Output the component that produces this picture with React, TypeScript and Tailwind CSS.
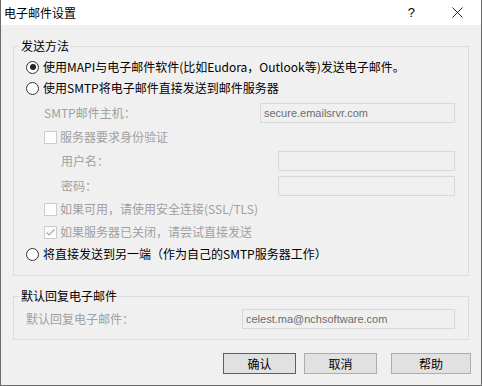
import React from "react";

const F = { fontFamily: '"Noto Sans CJK SC", "Liberation Sans", sans-serif' };

function Radio({ checked }: { checked?: boolean }) {
  return (
    <span className="w-[13px] h-[13px] rounded-full border border-[#333] bg-white flex items-center justify-center shrink-0">
      {checked && <span className="w-[6px] h-[6px] rounded-full bg-[#222]" />}
    </span>
  );
}

function Check({ checked }: { checked?: boolean }) {
  return (
    <span className="w-[13px] h-[13px] border border-[#cccccc] bg-[#fcfcfc] flex items-center justify-center shrink-0">
      {checked && (
        <svg width="11" height="11" viewBox="0 0 11 11">
          <path d="M1.5 5.5 L4 8 L9.5 2.5" fill="none" stroke="#a8a8a8" strokeWidth="1.2" />
        </svg>
      )}
    </span>
  );
}

function Input({ value, w }: { value?: string; w: string }) {
  return (
    <div
      className={`${w} h-[20px] border border-[#d9d9d9] bg-[#f0f0f0] flex items-center pl-[3px] text-[11px] text-[#6d6d6d]`}
      style={{ fontFamily: '"Liberation Sans", sans-serif' }}
    >
      {value}
    </div>
  );
}

export default function App() {
  return (
    <div
      className="w-[482px] h-[386px] bg-[#f0f0f0] border-x border-b border-[#6a6a6a] flex flex-col text-[12px] text-black"
      style={F}
    >
      <div className="h-[25px] bg-white flex items-center pl-[3px] shrink-0">
        <span className="leading-[16px]">电子邮件设置</span>
        <span className="ml-auto mr-[37px] text-[13px]" style={{ fontFamily: '"Liberation Sans", sans-serif' }}>?</span>
        <svg width="11" height="11" viewBox="0 0 11 11" className="mr-[18px]">
          <path d="M0.5 0.5 L10.5 10.5 M10.5 0.5 L0.5 10.5" stroke="#222" strokeWidth="1" />
        </svg>
      </div>

      <fieldset className="ml-[12px] mt-[13px] w-[456px] border border-[#dcdcdc] pl-[12px] pr-[13px] pb-[11px] flex flex-col">
        <legend className="-ml-[6px] px-[1px] leading-[16px]">发送方法</legend>
        <div className="mt-[3px] h-[20px] flex items-center">
          <Radio checked />
          <span className="ml-[4px]">使用MAPI与电子邮件软件(比如Eudora，Outlook等)发送电子邮件。</span>
        </div>
        <div className="mt-[1px] h-[20px] flex items-center">
          <Radio />
          <span className="ml-[4px]">使用SMTP将电子邮件直接发送到邮件服务器</span>
        </div>
        <div className="mt-[5px] h-[20px] flex items-center justify-between pl-[18px] text-[#a0a0a0]">
          <span>SMTP邮件主机：</span>
          <Input w="w-[195px]" value="secure.emailsrvr.com" />
        </div>
        <div className="mt-[4px] h-[20px] flex items-center pl-[18px] text-[#a0a0a0]">
          <Check />
          <span className="ml-[3px]">服务器要求身份验证</span>
        </div>
        <div className="mt-[4px] h-[20px] flex items-center justify-between pl-[35px] text-[#a0a0a0]">
          <span>用户名：</span>
          <Input w="w-[177px]" />
        </div>
        <div className="mt-[5px] h-[20px] flex items-center justify-between pl-[35px] text-[#a0a0a0]">
          <span>密码：</span>
          <Input w="w-[177px]" />
        </div>
        <div className="mt-[3px] h-[20px] flex items-center pl-[18px] text-[#a0a0a0]">
          <Check />
          <span className="ml-[3px]">如果可用，请使用安全连接(SSL/TLS)</span>
        </div>
        <div className="mt-[3px] h-[20px] flex items-center pl-[18px] text-[#a0a0a0]">
          <Check checked />
          <span className="ml-[3px]">如果服务器已关闭，请尝试直接发送</span>
        </div>
        <div className="mt-[2px] h-[20px] flex items-center">
          <Radio />
          <span className="ml-[4px]">将直接发送到另一端（作为自己的SMTP服务器工作）</span>
        </div>
      </fieldset>

      <fieldset className="ml-[12px] mt-[12px] w-[456px] border border-[#dcdcdc] pl-[12px] pr-[13px] pb-[10px] flex flex-col">
        <legend className="-ml-[6px] px-[1px] leading-[16px]">默认回复电子邮件</legend>
        <div className="mt-[5px] h-[20px] flex items-center justify-between text-[#a0a0a0]">
          <span>默认回复电子邮件：</span>
          <Input w="w-[213px]" value="celest.ma@nchsoftware.com" />
        </div>
      </fieldset>

      <div className="mt-[13px] flex pl-[222px]">
        <button className="w-[73px] h-[21px] border border-[#0078d7] bg-[#e1e1e1] flex items-center justify-center leading-none">确认</button>
        <button className="ml-[8px] w-[73px] h-[21px] border border-[#adadad] bg-[#e1e1e1] flex items-center justify-center leading-none">取消</button>
        <button className="ml-[14px] w-[80px] h-[21px] border border-[#adadad] bg-[#e1e1e1] flex items-center justify-center leading-none">帮助</button>
      </div>
    </div>
  );
}
